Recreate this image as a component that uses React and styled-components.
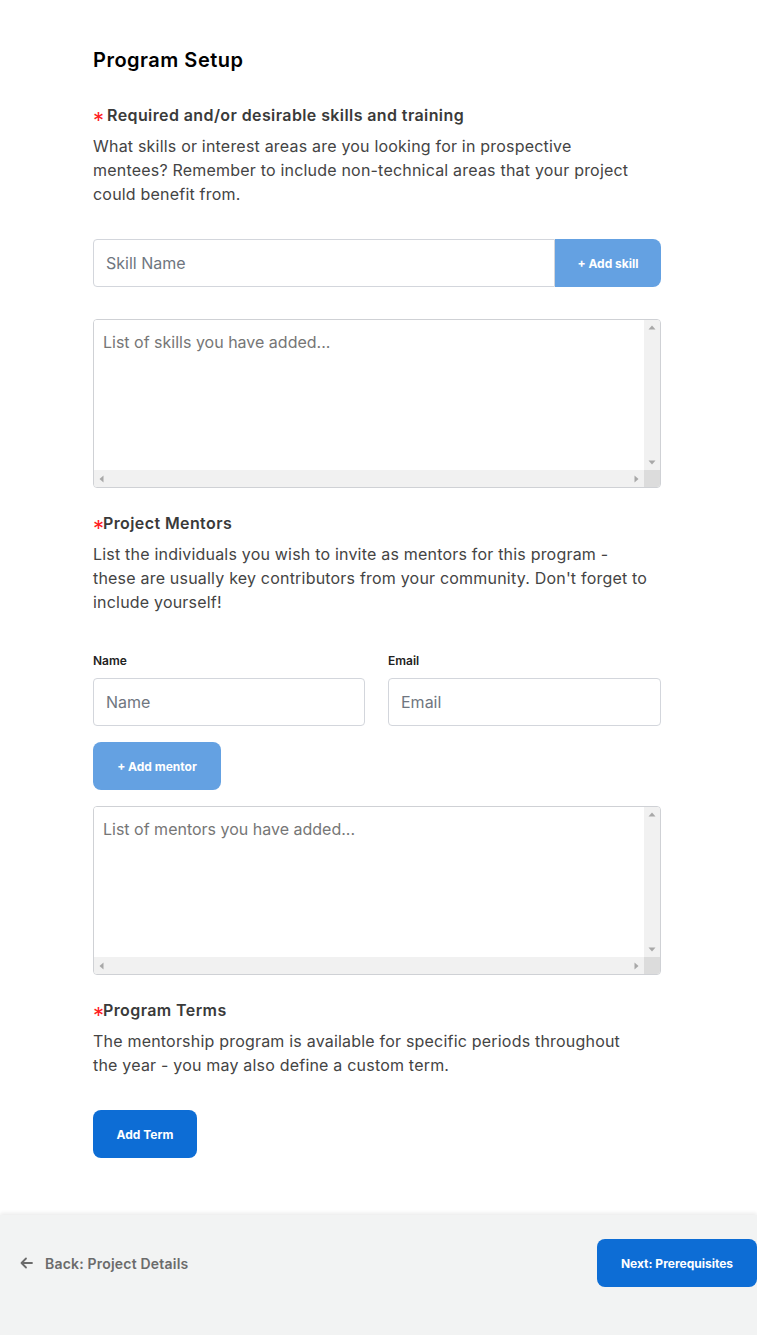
import React from 'react';
import styled, { createGlobalStyle } from 'styled-components';

const GlobalStyle = createGlobalStyle`
  html, body {
    margin: 0;
    padding: 0;
    background: #ffffff;
  }

  body {
    font-family: Inter, "Noto Sans", sans-serif;
    color: #444;
  }

  * {
    box-sizing: border-box;
  }
`;

const Page = styled.div`
  display: flex;
  flex-direction: column;
  min-height: 1335px;
`;

const Main = styled.main`
  flex: 1;
  width: 568px;
  margin-left: 93px;
  padding-top: 48px;
  padding-bottom: 56px;
`;

const Title = styled.h2`
  margin: 0 0 31px;
  font-size: 20px;
  line-height: 24px;
  font-weight: 600;
  letter-spacing: 0.5px;
  color: #000;
`;

const Section = styled.section`
  display: flex;
  flex-direction: column;
`;

const Label = styled.h3`
  display: flex;
  align-items: center;
  margin: 0 0 7px;
  font-size: 16px;
  line-height: 24px;
  font-weight: 600;
  letter-spacing: 0.4px;
  color: #3a3a3a;
`;

const Star = styled.span`
  display: inline-block;
  width: ${({ spaced }) => (spaced ? '14px' : '10px')};
  color: #ff1e1e;
  font-size: 22px;
  line-height: 24px;
  font-weight: 400;
  transform: translateY(5px);
`;

const Help = styled.p`
  margin: 0 0 ${({ gap }) => gap ?? 33}px;
  font-size: 16px;
  line-height: 24px;
  letter-spacing: 0.2px;
  color: #444;
`;

const InputRow = styled.div`
  display: flex;
  height: 48px;
  margin-bottom: 32px;
`;

const TextInput = styled.input`
  flex: ${({ joined }) => (joined ? '1 1 auto' : '0 0 48px')};
  min-width: 0;
  width: 100%;
  height: 48px;
  padding: 0 12px;
  border: 1px solid #d3d6dc;
  border-radius: ${({ joined }) => (joined ? '4px 0 0 4px' : '4px')};
  font-family: inherit;
  font-size: 16px;
  color: #333;
  background: #fff;

  &::placeholder {
    color: #6f7680;
  }
`;

const Button = styled.button`
  flex-shrink: 0;
  width: ${({ w }) => w}px;
  height: 48px;
  padding: 0;
  border: none;
  border-radius: ${({ joined }) => (joined ? '0 8px 8px 0' : '8px')};
  background: ${({ light }) => (light ? '#64a1e2' : '#0d6dd5')};
  color: #fff;
  font-family: inherit;
  font-size: 12px;
  font-weight: 700;
  cursor: pointer;
`;

const ListFrame = styled.div`
  display: grid;
  grid-template-columns: 1fr 16px;
  grid-template-rows: 1fr 17px;
  height: 169px;
  margin-bottom: 23px;
  border: 1px solid #cfd1d5;
  border-radius: 4px;
  overflow: hidden;
  background: #fff;
`;

const ListBox = styled.textarea`
  display: block;
  width: 100%;
  height: 100%;
  padding: 10px 9px;
  border: none;
  outline: none;
  overflow: hidden;
  resize: none;
  font-family: inherit;
  font-size: 16px;
  line-height: 24px;

  &::placeholder {
    color: #767676;
  }
`;

const Track = styled.div`
  display: flex;
  flex-direction: ${({ vertical }) => (vertical ? 'column' : 'row')};
  justify-content: space-between;
  align-items: center;
  background: #f1f1f1;
`;

const Corner = styled.div`
  background: #dcdcdc;
`;

const TrackArrow = ({ dir }) => {
  const shapes = {
    up: 'M4.5 9.5h7L8 5.5z',
    down: 'M4.5 6.5h7L8 10.5z',
    left: 'M9.5 4.5v7l-4-3.5z',
    right: 'M6.5 4.5v7l4-3.5z',
  };
  return (
    <svg width="16" height="16" viewBox="0 0 16 16">
      <path d={shapes[dir]} fill="#a8a8a8" />
    </svg>
  );
};

const ListField = ({ placeholder }) => (
  <ListFrame>
    <ListBox placeholder={placeholder} />
    <Track vertical>
      <TrackArrow dir="up" />
      <TrackArrow dir="down" />
    </Track>
    <Track>
      <TrackArrow dir="left" />
      <TrackArrow dir="right" />
    </Track>
    <Corner />
  </ListFrame>
);

const MentorGrid = styled.div`
  display: grid;
  grid-template-columns: 272px 273px;
  column-gap: 23px;
  margin-bottom: 16px;
`;

const Field = styled.label`
  display: flex;
  flex-direction: column;
  gap: 9px;
`;

const FieldName = styled.span`
  font-size: 12px;
  line-height: 16px;
  font-weight: 600;
  color: #222;
`;

const ActionRow = styled.div`
  display: flex;
  margin-bottom: ${({ gap }) => gap ?? 16}px;
`;

const Footer = styled.footer`
  display: flex;
  align-items: center;
  justify-content: space-between;
  height: 120px;
  padding: 0 0 24px 20px;
  background: #f2f3f3;
  box-shadow: 0 -2px 4px rgba(0, 0, 0, 0.08);
`;

const BackLink = styled.a`
  display: flex;
  align-items: center;
  gap: 12px;
  font-size: 14px;
  font-weight: 600;
  letter-spacing: 0.2px;
  color: #6b6b6b;
  text-decoration: none;
`;

const Arrow = () => (
  <svg width="13" height="12" viewBox="0 0 13 12" fill="none" stroke="#6b6b6b" strokeWidth="1.8" strokeLinecap="round" strokeLinejoin="round">
    <path d="M12 6H1.5M6 1.5L1.5 6L6 10.5" />
  </svg>
);

const App = () => (
  <Page>
    <GlobalStyle />
    <Main>
      <Title>Program Setup</Title>

      <Section>
        <Label><Star spaced>*</Star>Required and/or desirable skills and training</Label>
        <Help>
          What skills or interest areas are you looking for in prospective<br />
          mentees? Remember to include non-technical areas that your project<br />
          could benefit from.
        </Help>
        <InputRow>
          <TextInput joined placeholder="Skill Name" />
          <Button light joined w={106}>+ Add skill</Button>
        </InputRow>
        <ListField placeholder="List of skills you have added..." />
      </Section>

      <Section>
        <Label><Star>*</Star>Project Mentors</Label>
        <Help gap={39}>
          List the individuals you wish to invite as mentors for this program -<br />
          these are usually key contributors from your community. Don't forget to<br />
          include yourself!
        </Help>
        <MentorGrid>
          <Field>
            <FieldName>Name</FieldName>
            <TextInput placeholder="Name" />
          </Field>
          <Field>
            <FieldName>Email</FieldName>
            <TextInput placeholder="Email" />
          </Field>
        </MentorGrid>
        <ActionRow>
          <Button light w={128}>+ Add mentor</Button>
        </ActionRow>
        <ListField placeholder="List of mentors you have added..." />
      </Section>

      <Section>
        <Label><Star>*</Star>Program Terms</Label>
        <Help>
          The mentorship program is available for specific periods throughout<br />
          the year - you may also define a custom term.
        </Help>
        <ActionRow gap={0}>
          <Button w={104}>Add Term</Button>
        </ActionRow>
      </Section>
    </Main>

    <Footer>
      <BackLink href="#">
        <Arrow />
        Back: Project Details
      </BackLink>
      <Button w={160}>Next: Prerequisites</Button>
    </Footer>
  </Page>
);

export default App;
